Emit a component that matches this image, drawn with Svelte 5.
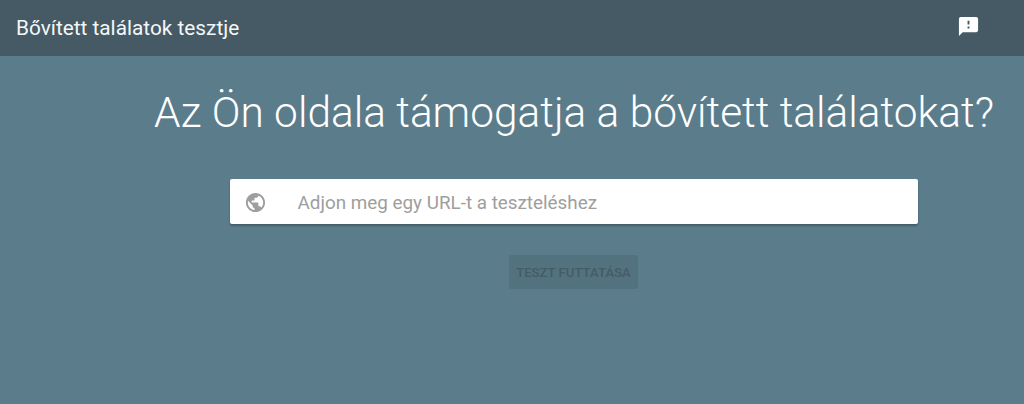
<script>
  let url = $state('');
</script>

<div class="page">
  <header class="topbar">
    <span class="title">Bővített találatok tesztje</span>
    <button class="feedback" aria-label="Visszajelzés">
      <svg viewBox="0 0 24 24" width="23" height="23">
        <path fill="#fff" d="M20 2H4c-1.1 0-1.99.9-1.99 2L2 22l4-4h14c1.1 0 2-.9 2-2V4c0-1.1-.9-2-2-2zm-7 12h-2v-2h2v2zm0-4h-2V6h2v4z" />
      </svg>
    </button>
  </header>

  <main class="content">
    <h1>Az Ön oldala támogatja a bővített találatokat?</h1>
    <div class="search">
      <svg class="globe" viewBox="0 0 24 24" width="23" height="23">
        <path fill="#9e9e9e" d="M12 2C6.48 2 2 6.48 2 12s4.48 10 10 10 10-4.48 10-10S17.52 2 12 2zm-1 17.93c-3.95-.49-7-3.85-7-7.93 0-.62.08-1.21.21-1.79L9 15v1c0 1.1.9 2 2 2v1.93zm6.9-2.54c-.26-.81-1-1.39-1.9-1.39h-1v-3c0-.55-.45-1-1-1H8v-2h2c.55 0 1-.45 1-1V7h2c1.1 0 2-.9 2-2v-.41c2.93 1.19 5 4.06 5 7.41 0 2.08-.8 3.97-2.1 5.39z" />
      </svg>
      <input type="text" placeholder="Adjon meg egy URL-t a teszteléshez" bind:value={url} />
    </div>
    <button class="run" disabled>TESZT FUTTATÁSA</button>
  </main>
</div>

<style>
  :global(body) {
    margin: 0;
    background: #5a7c8b;
    font-family: Roboto, sans-serif;
  }
  .page {
    height: 404px;
    overflow: hidden;
    background: #5a7c8b;
  }
  .topbar {
    height: 56px;
    background: #455a64;
    display: flex;
    align-items: center;
    justify-content: space-between;
    padding: 0 44px 0 16px;
  }
  .title {
    color: #fff;
    font-size: 20.8px;
    opacity: 0.95;
  }
  .feedback {
    border: none;
    background: none;
    padding: 0;
    width: 23px;
    height: 23px;
    display: block;
    margin-bottom: 4px;
  }
  .content {
    display: flex;
    flex-direction: column;
    align-items: center;
    padding-left: 124px;
  }
  h1 {
    margin: 35px 0 0;
    color: #fff;
    font-size: 42.4px;
    line-height: 44px;
    font-weight: 300;
    white-space: nowrap;
  }
  .search {
    margin-top: 44px;
    width: 688px;
    height: 45px;
    background: #fff;
    border-radius: 2px;
    box-shadow: 0 2px 2px rgba(0, 0, 0, 0.25);
    display: flex;
    align-items: center;
  }
  .globe {
    margin: 1px 0 0 14px;
    flex: none;
  }
  .search input {
    flex: 1;
    min-width: 0;
    margin-left: 28.5px;
    border: none;
    outline: none;
    background: none;
    padding: 3px 2px 1px;
    font-family: Roboto, sans-serif;
    font-size: 18.85px;
    color: #333;
  }
  .search input::placeholder {
    color: #9e9e9e;
    opacity: 1;
  }
  .run {
    margin: 31px 1px 0 0;
    width: 129px;
    height: 34px;
    border: none;
    border-radius: 2px;
    background: #537280;
    color: #465b66;
    font-family: Roboto, sans-serif;
    font-size: 13.2px;
    font-weight: 500;
    padding: 0;
  }
</style>
